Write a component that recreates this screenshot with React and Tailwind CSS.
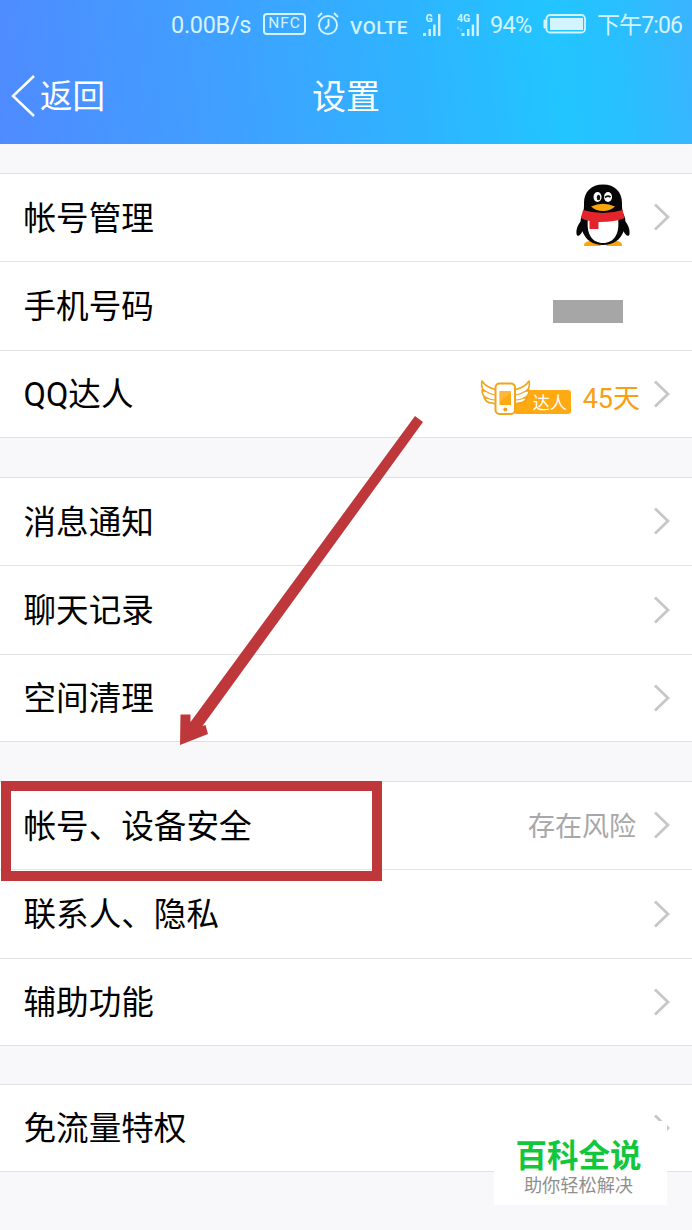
import React from 'react';

const groups = [
  {
    gap: 'mt-[29px]',
    rows: [
      { label: '帐号管理', extra: <Penguin /> },
      { label: '手机号码', extra: <div className="w-[70px] h-[23px] mt-[11px] mr-[69px] bg-[#a6a6a6]" />, noArrow: true },
      { label: 'QQ达人', extra: <MasterBadge /> },
    ],
  },
  {
    gap: 'mt-[39px]',
    rows: [{ label: '消息通知' }, { label: '聊天记录' }, { label: '空间清理' }],
  },
  {
    gap: 'mt-[39px]',
    rows: [
      {
        label: '帐号、设备安全',
        extra: <span className="mr-[17px] -mt-[3px] text-[27px] leading-none text-[#a8a8aa]">存在风险</span>,
      },
      { label: '联系人、隐私' },
      { label: '辅助功能' },
    ],
  },
  {
    gap: 'mt-[38px]',
    rows: [{ label: '免流量特权' }],
  },
];

const rowHeights = ['h-[88px] border-b', 'h-[89px] border-b'];

function Penguin() {
  return (
    <svg className="w-[54px] h-[64px] mr-[23px] -mt-[3px]" viewBox="0 0 54 64">
      <path d="M8 62q-1-3 5-5h9l3 5zM46 62q1-3-4-5h-9l-3 5z" fill="#f8a80c" />
      <path d="M8 34C2 39 0 45 .5 50c1 4 4 1 7-4M46 34c6 5 8 11 7.500 16-1 4-4 1-7-4" fill="#060606" />
      <path d="M27 .5C15 .5 8 8 8 19c0 4 0 6-1 10-3 5-3 11-1 17 3 10 11 15 21 15s18-5 21-15c2-6 2-12-1-17-1-4-1-6-1-10C46 8 39 .5 27 .5z" fill="#060606" />
      <path d="M12 34c-2 16 4 25 15 25s17-9 15-25z" fill="#fff" />
      <path d="M7 26q20 6 39.500 0l2 8q-8 4-26 4v7h-9v-8Q8 36 5 34z" fill="#e3252b" />
      <ellipse cx="21.500" cy="13" rx="4" ry="5" fill="#fff" />
      <ellipse cx="32" cy="13" rx="4" ry="5" fill="#fff" />
      <ellipse cx="22.500" cy="13.500" rx="1.700" ry="2.800" fill="#111" />
      <path d="M29 13.500q2.500-2.500 5.500-.5" fill="none" stroke="#111" strokeWidth="1.800" />
      <path d="M15 22.500q12-5.500 24 0-5 4.500-12 4.500t-12-4.500z" fill="#f8a80c" />
    </svg>
  );
}

function MasterBadge() {
  return (
    <div className="flex items-center mt-[7px] mr-[13px]">
      <div className="relative w-[92px] h-[36px]">
        <div className="absolute left-[34px] top-[10px] flex justify-end items-center w-[57px] h-[24px] pr-[4px] rounded-[3px] bg-[#ffa913] text-white text-[17px] leading-none">
          达人
        </div>
        <svg className="absolute left-0 top-0 w-[52px] h-[36px]" viewBox="0 0 52 36">
          <g fill="#fff" stroke="#f2a41b" strokeWidth="1.600" strokeLinejoin="round">
            <path d="M17 10C12 9 6 7 2 1c-1 5 0 8 3 10-2 0-2 0-3-1 0 4 2 7 5 8-1 0-2 0-3-1 1 4 4 6 8 6l4 1" />
            <path d="M34 10c5-1 11-3 15-9 1 5 0 8-3 10 2 0 2 0 3-1 0 4-2 7-5 8 1 0 2 0 3-1-1 4-4 6-8 6l-4 1" />
            <path d="M5 11q5 3 10 4M7 18q4 2 8 2M46 11q-5 3-10 4M44 18q-4 2-8 2" fill="none" strokeWidth="1.200" />
            <rect x="15.500" y="3.500" width="19.500" height="30.500" rx="4" strokeWidth="2" />
          </g>
          <path d="M19.500 11H31v14H19.500z" fill="#ffa913" />
          <path d="M19.500 22L31 13v-2H19.500z" fill="#ffc14d" opacity=".6" />
          <circle cx="25.300" cy="29.500" r="2" fill="#f5a11a" />
        </svg>
      </div>
      <span className="ml-[11px] mt-[3px] text-[27px] leading-none text-[#f7a013] font-['Roboto','Noto_Sans_CJK_SC',sans-serif]">45天</span>
    </div>
  );
}

function Chevron() {
  return (
    <svg className="w-[17px] h-[28px] mr-[22px] -mt-px shrink-0" viewBox="0 0 17 28">
      <path d="M2 1.500L15 14 2 26.500" fill="none" stroke="#c7c7c9" strokeWidth="2.800" />
    </svg>
  );
}

function Row({ label, extra, noArrow, height }) {
  return (
    <div className={`flex items-center pl-[23.500px] border-[#e3e4e7] ${height}`}>
      <span className="flex-1 pt-[2px] text-[32.600px] leading-[48px] text-black font-['Roboto','Noto_Sans_CJK_SC',sans-serif]">
        {label}
      </span>
      {extra}
      {!noArrow && <Chevron />}
    </div>
  );
}

function Signal({ type }) {
  return (
    <svg className="w-[24px] h-[26px]" viewBox="0 0 24 26">
      <text x={type === 'G' ? 3.5 : 0} y="9.500" fontSize="10.500" fontWeight="700" fill="currentColor" fontFamily="Roboto, sans-serif">
        {type}
      </text>
      <path d="M1 21h3v3H1zM6.500 17h2.400v7H6.500zM11.200 12.500h2.400V24h-2.400zM16 2h2.400v22H16z" fill="currentColor" transform={type === 'G' ? undefined : 'translate(3.500 0)'} />
      {type === '4G' && <path d="M1 14l-1 3h2zM4 20l1-3H3z" fill="currentColor" opacity=".5" />}
    </svg>
  );
}

function StatusBar() {
  return (
    <div className="flex items-center h-[50px] pl-[171px] text-[#d3f4ff] font-['Roboto','Noto_Sans_CJK_SC',sans-serif] leading-none whitespace-nowrap">
      <span className="w-[92px] mt-px text-[23.500px] tracking-[-0.300px]">0.00B/s</span>
      <span className="flex items-center justify-center w-[43px] h-[22px] -mt-[2px] rounded-[4px] border-2 border-current text-[15.500px] tracking-[1px]">
        NFC
      </span>
      <svg className="w-[22px] h-[24px] ml-[11px] -mt-[3px]" viewBox="0 0 22 24" fill="none" stroke="currentColor" strokeWidth="1.900">
        <circle cx="11" cy="13" r="9" />
        <path d="M11.500 7v6.500L8 17M1 5l4-4M21 5l-4-4" />
      </svg>
      <span className="w-[72px] ml-[11px] mt-[4px] text-[19px] font-medium tracking-[0.500px]">VOLTE</span>
      <div className="flex -mt-px">
        <Signal type="G" />
        <div className="ml-[11px]">
          <Signal type="4G" />
        </div>
      </div>
      <span className="w-[53px] ml-[9px] mt-px text-[23.500px] tracking-[-0.700px]">94%</span>
      <svg className="w-[45px] h-[20px] -mt-[3px]" viewBox="0 0 45 20">
        <rect x="3.500" y="1" width="38.500" height="17.500" rx="3.500" fill="none" stroke="currentColor" strokeWidth="1.800" />
        <rect x="7" y="4" width="33" height="12" fill="currentColor" />
        <path d="M2.500 6H1v8h1.500z" fill="currentColor" stroke="currentColor" />
      </svg>
      <span className="ml-[9px] mt-px text-[23px] tracking-[-0.900px]">下午7:06</span>
    </div>
  );
}

export default function App() {
  return (
    <div className="relative w-[692px] h-[1230px] overflow-hidden bg-[#f8f8fa] font-['Noto_Sans_CJK_SC',sans-serif]">
      <header className="h-[144px] bg-[linear-gradient(83deg,#4f8bff_0%,#419eff_30%,#2eb4ff_60%,#22c5ff_80%,#27c0ff_88%,#3ab4fe_100%)]">
        <StatusBar />
        <div className="grid grid-cols-3 items-center h-[92px] text-white">
          <div className="flex items-center pl-[11px]">
            <svg className="w-[24px] h-[42px]" viewBox="0 0 24 42">
              <path d="M23 1L2 21l21 20" fill="none" stroke="currentColor" strokeWidth="2.500" />
            </svg>
            <span className="ml-[5px] pb-[5px] text-[32.500px] leading-[48px]">返回</span>
          </div>
          <span className="pb-[2px] text-center text-[34px] leading-[48px]">设置</span>
        </div>
      </header>

      {groups.map((group, i) => (
        <section key={i} className={`${group.gap} bg-white border-y border-[#dfe0e4]`}>
          {group.rows.map((row, j) => (
            <Row key={row.label} {...row} height={j === group.rows.length - 1 ? 'h-[86px]' : rowHeights[j]} />
          ))}
        </section>
      ))}

      {/* Highlight box and pointer */}
      <div className="absolute left-[1px] top-[781px] w-[381px] h-[100px] border-[10px] border-[#be383b]" />
      <svg className="absolute left-[170px] top-[410px] w-[260px] h-[340px]" viewBox="170 410 260 340">
        <path d="M415 416L423 422 202.500 726 205.500 725 208 734 180 745 180.500 714.500H190.500V722z" fill="#be383b" />
      </svg>

      {/* Corner mark */}
      <div className="absolute left-[494px] top-[1121px] w-[173px] h-[84px] flex flex-col items-center pr-[4px] bg-white">
        <span className="mt-[13px] text-[31.500px] leading-[38px] font-bold text-[#12c73b]">百科全说</span>
        <span className="mt-[1px] text-[18.200px] leading-[22px] text-[#8f8f8f]">助你轻松解决</span>
      </div>
    </div>
  );
}
